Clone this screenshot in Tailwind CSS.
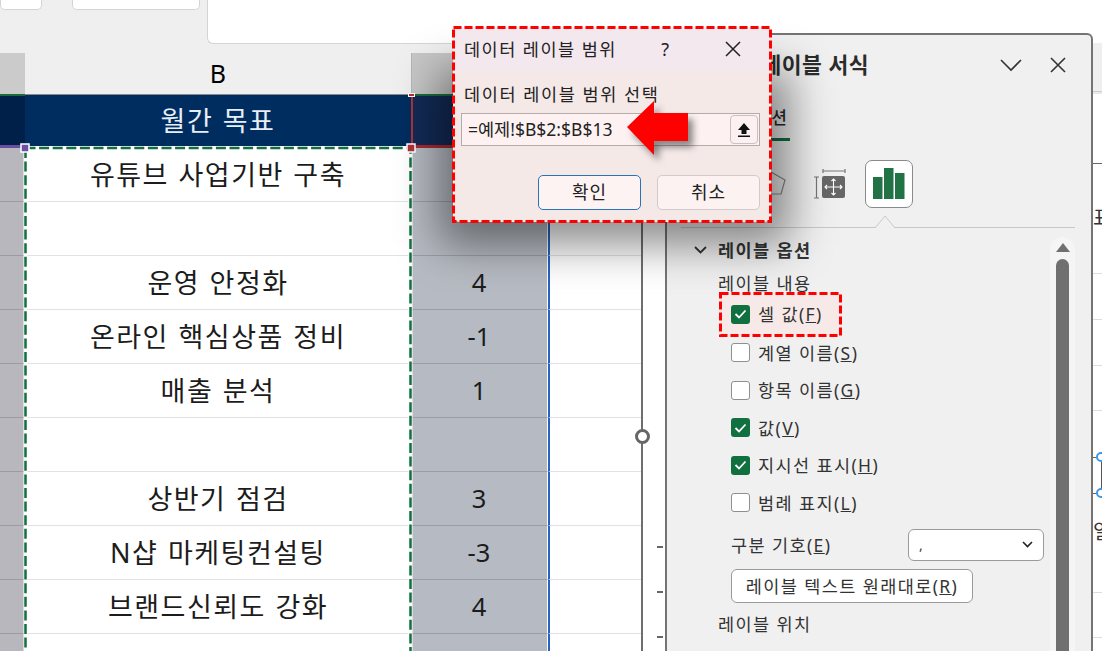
<!DOCTYPE html>
<html lang="ko"><head><meta charset="utf-8">
<script src="https://cdn.jsdelivr.net/npm/@tailwindcss/browser@4"></script>
</head>
<body class="m-0 bg-white">
<div class="relative w-[1102px] h-[651px] overflow-hidden bg-white text-[#1c1c1c] font-['Noto_Sans','Noto_Sans_CJK_KR',sans-serif]">

  <!-- ribbon -->
  <div class="flex items-start h-[53px] bg-[#efefef]">
    <div class="w-[42px] h-[10px] bg-white border border-t-0 border-[#d4d4d4] rounded-b-[5px]"></div>
    <div class="ml-[30px] w-[128px] h-[10px] bg-white border border-t-0 border-[#d4d4d4] rounded-b-[5px]"></div>
    <div class="ml-[7px] flex-1 h-[44px] bg-white border border-t-0 border-r-0 border-[#d4d4d4] rounded-bl-[6px]"></div>
  </div>

  <!-- column headers -->
  <div class="grid grid-cols-[25px_386px_138px_1fr] h-[41px] bg-[#efefef]">
    <div class="bg-[#cbcbcb]"></div>
    <div class="flex items-center justify-center text-[25px] leading-none text-black">B</div>
    <div class="bg-[#c6c6c6] border-l border-[#b5b5b5]"></div>
    <div class="bg-[#e8e8e8]"></div>
  </div>

  <!-- sheet -->
  <div class="grid grid-cols-[25px_386px_137px_94px] auto-rows-[54px] w-[642px] text-[25.5px] leading-none">
    <div class="bg-[#00204a] border-t-2 border-t-[#1a6b3c] border-b-[3px] border-b-[#6a4fa0]"></div>
    <div class="flex items-center justify-center pb-[2px] bg-[#002d5f] text-[#e8eef6] border-t border-[#8a8a8a] text-[27px] tracking-[1.5px] [word-spacing:1px]">월간 목표</div>
    <div class="bg-[#122a55] border-t-2 border-t-[#1a6b3c] border-b-[3px] border-b-[#a62a32] border-l-2 border-l-[#b23038]"></div>
    <div class="bg-[#e0e0e0]"></div>

    <div class="bg-[#b9b7be] border-b border-[#9d9ba2]"></div>
    <div class="flex items-center justify-center border-b border-[#e2e2e2] text-[27px] tracking-[1.5px] [word-spacing:1px]">유튜브 사업기반 구축</div>
    <div class="bg-[#b6bac2] border-b border-b-[#9a9da6] border-r border-r-white"></div>
    <div class="border-b border-b-[#e2e2e2] border-l-2 border-l-[#2563c4]"></div>

    <div class="bg-[#b9b7be] border-b border-[#9d9ba2]"></div>
    <div class="border-b border-[#e2e2e2]"></div>
    <div class="bg-[#b6bac2] border-b border-b-[#9a9da6] border-r border-r-white"></div>
    <div class="border-b border-b-[#e2e2e2] border-l-2 border-l-[#2563c4]"></div>

    <div class="bg-[#b9b7be] border-b border-[#9d9ba2]"></div>
    <div class="flex items-center justify-center border-b border-[#e2e2e2] text-[27px] tracking-[1.5px] [word-spacing:1px]">운영 안정화</div>
    <div class="flex items-center justify-center bg-[#b6bac2] border-b border-b-[#9a9da6] border-r border-r-white">4</div>
    <div class="border-b border-b-[#e2e2e2] border-l-2 border-l-[#2563c4]"></div>

    <div class="bg-[#b9b7be] border-b border-[#9d9ba2]"></div>
    <div class="flex items-center justify-center border-b border-[#e2e2e2] text-[27px] tracking-[1.5px] [word-spacing:1px]">온라인 핵심상품 정비</div>
    <div class="flex items-center justify-center bg-[#b6bac2] border-b border-b-[#9a9da6] border-r border-r-white">-1</div>
    <div class="border-b border-b-[#e2e2e2] border-l-2 border-l-[#2563c4]"></div>

    <div class="bg-[#b9b7be] border-b border-[#9d9ba2]"></div>
    <div class="flex items-center justify-center border-b border-[#e2e2e2] text-[27px] tracking-[1.5px] [word-spacing:1px]">매출 분석</div>
    <div class="flex items-center justify-center bg-[#b6bac2] border-b border-b-[#9a9da6] border-r border-r-white">1</div>
    <div class="border-b border-b-[#e2e2e2] border-l-2 border-l-[#2563c4]"></div>

    <div class="bg-[#b9b7be] border-b border-[#9d9ba2]"></div>
    <div class="border-b border-[#e2e2e2]"></div>
    <div class="bg-[#b6bac2] border-b border-b-[#9a9da6] border-r border-r-white"></div>
    <div class="border-b border-b-[#e2e2e2] border-l-2 border-l-[#2563c4]"></div>

    <div class="bg-[#b9b7be] border-b border-[#9d9ba2]"></div>
    <div class="flex items-center justify-center border-b border-[#e2e2e2] text-[27px] tracking-[1.5px] [word-spacing:1px]">상반기 점검</div>
    <div class="flex items-center justify-center bg-[#b6bac2] border-b border-b-[#9a9da6] border-r border-r-white">3</div>
    <div class="border-b border-b-[#e2e2e2] border-l-2 border-l-[#2563c4]"></div>

    <div class="bg-[#b9b7be] border-b border-[#9d9ba2]"></div>
    <div class="flex items-center justify-center border-b border-[#e2e2e2] text-[27px] tracking-[1.5px] [word-spacing:1px]">N샵 마케팅컨설팅</div>
    <div class="flex items-center justify-center bg-[#b6bac2] border-b border-b-[#9a9da6] border-r border-r-white">-3</div>
    <div class="border-b border-b-[#e2e2e2] border-l-2 border-l-[#2563c4]"></div>

    <div class="bg-[#b9b7be] border-b border-[#9d9ba2]"></div>
    <div class="flex items-center justify-center border-b border-[#e2e2e2] text-[27px] tracking-[1.5px] [word-spacing:1px]">브랜드신뢰도 강화</div>
    <div class="flex items-center justify-center bg-[#b6bac2] border-b border-b-[#9a9da6] border-r border-r-white">4</div>
    <div class="border-b border-b-[#e2e2e2] border-l-2 border-l-[#2563c4]"></div>

    <div class="bg-[#b9b7be]"></div>
    <div></div>
    <div class="bg-[#b6bac2] border-r border-r-white"></div>
    <div class="border-l-2 border-l-[#2563c4]"></div>
  </div>

  <!-- marching-ants copy range and handles -->
  <svg class="absolute left-[20px] top-[140px]" width="400" height="511" viewBox="0 0 400 511" fill="none">
    <path d="M5.5 8H390.5V520M5.5 8V520" stroke="#fff" stroke-width="4"/>
    <path d="M5.5 8H390.5V520M5.5 8V520" stroke="#107040" stroke-width="2.500" stroke-dasharray="10 3.6"/>
    <rect x="1" y="4" width="8" height="8" fill="#6d4fa3" stroke="#fff" stroke-width="1.5"/>
    <rect x="387" y="4" width="8" height="8" fill="#b23038" stroke="#fff" stroke-width="1.5"/>
  </svg>
  <div class="absolute left-[408px] top-[93px] w-[7px] h-[4px] bg-[#b23038] border border-white"></div>

  <!-- chart frame -->
  <div class="absolute left-[641px] top-[200px] bottom-0 w-[2px] bg-[#6e6e6e]"></div>
  <div class="absolute left-[635px] top-[429px] w-[15px] h-[15px] rounded-full bg-white border-[3px] border-[#666]"></div>
  <div class="absolute left-[657px] top-[546px] w-[6px] h-[2px] bg-[#666]"></div>
  <div class="absolute left-[657px] top-[591px] w-[6px] h-[2px] bg-[#666]"></div>
  <div class="absolute left-[657px] top-[636px] w-[6px] h-[2px] bg-[#666]"></div>

  <!-- strip right of the task pane -->
  <div class="absolute left-[1092px] top-[43px] right-0 h-[49px] bg-[#efefef] border-b border-[#cfcfcf]"></div>
  <div class="absolute left-[1092px] top-[163px] right-0 h-[1px] bg-[#666]"></div>
  <div class="absolute left-[1092px] top-[273px] right-0 h-[1px] bg-[#ddd]"></div>
  <div class="absolute left-[1092px] top-[319px] right-0 h-[1px] bg-[#ddd]"></div>
  <div class="absolute left-[1092px] top-[365px] right-0 h-[1px] bg-[#ddd]"></div>
  <div class="absolute left-[1092px] top-[410px] right-0 h-[1px] bg-[#ddd]"></div>
  <div class="absolute left-[1092px] top-[457px] right-0 h-[1px] bg-[#666]"></div>
  <div class="absolute left-[1092px] top-[493px] right-0 h-[1px] bg-[#666]"></div>
  <div class="absolute left-[1092px] top-[592px] right-0 h-[1px] bg-[#ddd]"></div>
  <div class="absolute left-[1092px] top-[637px] right-0 h-[1px] bg-[#ddd]"></div>
  <div class="absolute left-[1101px] top-[460px] w-[1px] h-[32px] bg-[#555]"></div>
  <div class="absolute left-[1096px] top-[452px] w-[10px] h-[10px] rounded-full bg-white border-2 border-[#3f97e6]"></div>
  <div class="absolute left-[1096px] top-[488px] w-[10px] h-[10px] rounded-full bg-white border-2 border-[#3f97e6]"></div>
  <div class="absolute left-[1093px] top-[204px] w-[9px] h-[28px] overflow-hidden text-[20px] leading-[28px] text-[#333]">표</div>
  <div class="absolute left-[1093px] top-[518px] w-[9px] h-[28px] overflow-hidden text-[20px] leading-[28px] text-[#333]">일</div>

  <!-- task pane -->
  <div class="absolute left-[665px] top-[33px] w-[428px] h-[640px] bg-[#f0f0f0] border-2 border-[#747474] rounded-tr-[6px] text-[#333]">
    <div class="flex items-center h-[60px]">
      <div class="w-[202px] flex justify-end whitespace-nowrap text-[21.5px] tracking-[0.5px] font-bold text-[#2b2b2b]">데이터 레이블 서식</div>
      <svg class="ml-[130px]" width="24" height="14" viewBox="0 0 24 14" fill="none" stroke="#333" stroke-width="1.6"><path d="M2 2l10 10L22 2"/></svg>
      <svg class="ml-[27px]" width="16" height="16" viewBox="0 0 16 16" fill="none" stroke="#333" stroke-width="1.6"><path d="M1 1l14 14M15 1L1 15"/></svg>
    </div>
    <div class="h-[46px] w-[123px] flex justify-end items-start pt-[10px] pr-[3px] text-[17px] leading-[26px] font-medium border-b-[3px] border-[#107040] text-[#2b2b2b] whitespace-nowrap">레이블 옵션</div>

    <div class="flex items-start h-[79px] pt-[20px]">
      <svg class="ml-[88px] mt-[8px]" width="32" height="32" viewBox="0 0 32 32" fill="none" stroke="#8a8a8a" stroke-width="1.2"><path d="M16 3l14 8-4 14H10L4 11z"/></svg>
      <svg class="ml-[26px] mt-[7px]" width="33" height="31" viewBox="0 0 33 31" fill="none">
        <path d="M10 1v4M32 1v4M10 3h22M1 9h5M1 30h5M3.500 9v21" stroke="#777" stroke-width="1.200"/>
        <rect x="9" y="8" width="23" height="22" rx="2" fill="#666"/>
        <path d="M20.500 11v16M12 19h17M18.500 13l2-2 2 2M18.500 25l2 2 2-2M14 17l-2 2 2 2M27 17l2 2-2 2" stroke="#fff" stroke-width="1.100"/>
      </svg>
      <div class="ml-[19px] -mt-[1px] w-[48px] h-[48px] flex items-center justify-center bg-white border border-[#8a8a8a] rounded-[7px]">
        <svg width="32" height="32" viewBox="0 0 32 32" fill="#217346"><path d="M0 9h9.500v22H0zM11 0h9.500v31H11zM22 5h9.500v26H22z"/></svg>
      </div>
    </div>

    <!-- separator with pointer -->
    <div class="relative ml-[14px] w-[394px] h-[8px] border-b border-[#c8c8c8]">
      <svg class="absolute left-[193px] -top-[6px]" width="22" height="15" viewBox="0 0 22 15" fill="#f0f0f0" stroke="#c8c8c8"><path d="M1 14L11 2l10 12"/></svg>
    </div>

    <div class="flex flex-col pt-[10px] pl-[26px] text-[17.5px] leading-[24px] tracking-[1.4px]">
      <div class="flex items-center h-[24px] font-bold text-[#333]">
        <svg class="mr-[10px]" width="15" height="10" viewBox="0 0 15 10" fill="none" stroke="#333" stroke-width="1.800"><path d="M2 2l5.500 5.500L13 2"/></svg>
        레이블 옵션
      </div>
      <div class="pl-[25px] mt-[9px] h-[24px]">레이블 내용</div>

      <div class="flex flex-col mt-[0px]">
        <div class="relative flex items-center h-[46px] pl-[38px] mt-[-4px] gap-[8px]">
          <div class="absolute left-[27px] top-[2px] w-[121px] h-[43px] bg-[#f6e9e8]"></div>
          <svg class="absolute left-[26px] top-[1px]" width="123" height="45" viewBox="0 0 123 45" fill="none"><rect x="1.500" y="1.500" width="120" height="42" stroke="#f00" stroke-width="3" stroke-dasharray="8 3"/></svg>
          <div class="relative w-[19px] h-[19px] rounded-[3px] bg-[#107040] flex items-center justify-center"><svg width="13" height="10" viewBox="0 0 13 10" fill="none" stroke="#fff" stroke-width="1.800"><path d="M1.500 5l3.500 3.500 6.500-7"/></svg></div>
          <span class="relative">셀 값(<u>F</u>)</span>
        </div>
        <div class="flex items-center h-[37.500px] pl-[38px] mt-[-3px] gap-[8px]"><div class="w-[19px] h-[19px] rounded-[3px] bg-white border border-[#8f8f8f]"></div><span>계열 이름(<u>S</u>)</span></div>
        <div class="flex items-center h-[37.500px] pl-[38px] gap-[8px]"><div class="w-[19px] h-[19px] rounded-[3px] bg-white border border-[#8f8f8f]"></div><span>항목 이름(<u>G</u>)</span></div>
        <div class="flex items-center h-[37.500px] pl-[38px] gap-[8px]"><div class="w-[19px] h-[19px] rounded-[3px] bg-[#107040] flex items-center justify-center"><svg width="13" height="10" viewBox="0 0 13 10" fill="none" stroke="#fff" stroke-width="1.800"><path d="M1.500 5l3.500 3.500 6.500-7"/></svg></div><span>값(<u>V</u>)</span></div>
        <div class="flex items-center h-[37.500px] pl-[38px] gap-[8px]"><div class="w-[19px] h-[19px] rounded-[3px] bg-[#107040] flex items-center justify-center"><svg width="13" height="10" viewBox="0 0 13 10" fill="none" stroke="#fff" stroke-width="1.800"><path d="M1.500 5l3.500 3.500 6.500-7"/></svg></div><span>지시선 표시(<u>H</u>)</span></div>
        <div class="flex items-center h-[37.500px] pl-[38px] gap-[8px]"><div class="w-[19px] h-[19px] rounded-[3px] bg-white border border-[#8f8f8f]"></div><span>범례 표지(<u>L</u>)</span></div>
      </div>

      <div class="flex items-center h-[32px] pl-[38px] mt-[7px]">
        <span class="w-[177px]">구분 기호(<u>E</u>)</span>
        <div class="w-[136px] h-[32px] flex items-center justify-between px-[10px] bg-white border border-[#9a9a9a] rounded-[6px]">
          <span class="text-[14px] text-[#345]">,</span>
          <svg width="11" height="7" viewBox="0 0 11 7" fill="none" stroke="#222" stroke-width="1.600"><path d="M1 1l4.500 4.500L10 1"/></svg>
        </div>
      </div>
      <div class="ml-[38px] mt-[8px] w-[242px] h-[34px] flex items-center justify-center bg-white border border-[#9a9a9a] rounded-[6px] whitespace-nowrap">레이블 텍스트 원래대로(<u>R</u>)</div>
      <div class="pl-[25px] mt-[9px]">레이블 위치</div>
    </div>

    <!-- scrollbar -->
    <div class="absolute left-[383px] top-[202px] w-[25px] h-[440px] flex flex-col items-center pt-[6px] bg-[#f5f5f5] rounded-t-[12px]">
      <div class="w-0 h-0 border-l-[7px] border-r-[7px] border-b-[9px] border-l-transparent border-r-transparent border-b-[#707070]"></div>
      <div class="mt-[7px] w-[13px] flex-1 bg-[#707070] rounded-t-[7px]"></div>
    </div>
  </div>

  <!-- dialog drop shadow -->
  <svg class="absolute left-[340px] top-[0px]" width="550" height="350" viewBox="0 0 550 350">
    <defs><filter id="dlg" x="-40%" y="-70%" width="180%" height="240%"><feGaussianBlur stdDeviation="22"/></filter></defs>
    <rect x="100" y="70" width="350" height="175" fill="#000" fill-opacity="0.45" filter="url(#dlg)"/>
  </svg>

  <!-- dialog -->
  <div class="absolute left-[453px] top-[27px] w-[318px] h-[195px] bg-[#f5e9e8] rounded-[7px]">
    <div class="flex items-center h-[44px] pl-[11px] bg-[#f3e8ee] rounded-t-[7px] text-[17.5px] tracking-[1.5px] text-[#222]">
      <span class="w-[190px] whitespace-nowrap">데이터 레이블 범위</span>
      <span class="text-[18px] w-[24px] text-center">?</span>
      <svg class="ml-[47px]" width="16" height="16" viewBox="0 0 16 16" fill="none" stroke="#222" stroke-width="1.500"><path d="M1 1l14 14M15 1L1 15"/></svg>
    </div>
    <div class="pl-[11px] pt-[10px] text-[17.5px] leading-[26px] tracking-[1.6px] text-[#222] whitespace-nowrap">데이터 레이블 범위 선택</div>
    <div class="ml-[8px] mt-[6px] w-[299px] h-[33px] flex items-center justify-between pl-[6px] pr-[1px] bg-[#fdf2f1] border border-[#b5abab] text-[17.5px] text-[#222]">
      <span>=예제!$B$2:$B$13</span>
      <div class="w-[28px] h-[29px] flex items-center justify-center bg-[#fcf1f0] border border-[#c9c0c0] rounded-[4px]">
        <svg width="16" height="16" viewBox="0 0 16 16" fill="#111"><path d="M8 1l6 7H10.500v4h-5V8H2zM2 13.500h12V15H2z"/></svg>
      </div>
    </div>
    <div class="flex justify-end gap-[16px] pr-[11px] mt-[29px]">
      <div class="w-[103px] h-[35px] flex items-center justify-center bg-[#fdf3f2] border-[1.500px] border-[#2a73b8] rounded-[5px] text-[18px] tracking-[1px] text-[#222]">확인</div>
      <div class="w-[103px] h-[35px] flex items-center justify-center bg-[#fcf2f1] border border-[#d3c9c9] rounded-[5px] text-[18px] tracking-[1px] text-[#222]">취소</div>
    </div>
    <svg class="absolute -left-[1px] -top-[1px]" width="320" height="197" viewBox="0 0 320 197" fill="none"><rect x="1.500" y="1.500" width="317" height="194" stroke="#f00" stroke-width="3" stroke-dasharray="8 3"/></svg>
  </div>

  <!-- callout arrow -->
  <svg class="absolute left-[610px] top-[85px]" width="105" height="95" viewBox="0 0 105 95">
    <defs><filter id="arw" x="-30%" y="-30%" width="160%" height="160%"><feGaussianBlur stdDeviation="3.5"/></filter></defs>
    <path d="M17 42L44 16v12h34v28H44v14z" transform="translate(5 6)" fill="#000" fill-opacity="0.45" filter="url(#arw)"/>
    <path d="M17 42L44 16v12h34v28H44v14z" fill="#f00"/>
  </svg>
</div>
</body></html>
